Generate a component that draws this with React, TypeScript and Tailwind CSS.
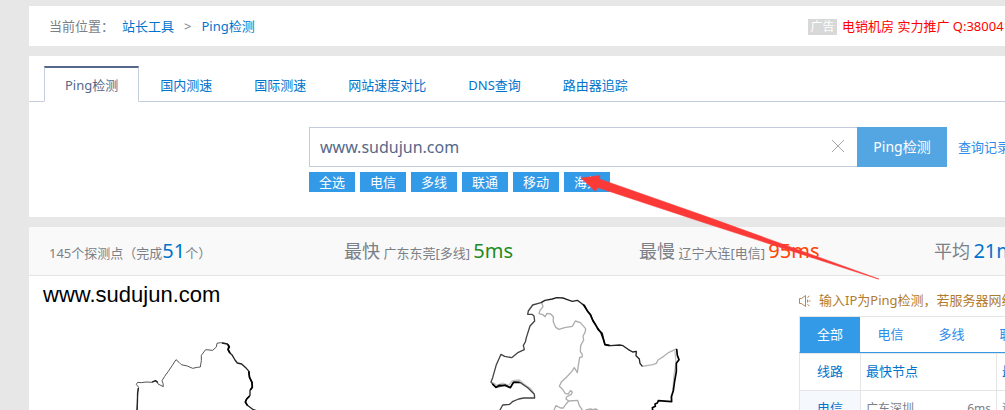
import { JSX } from "react";

const tabs = ["Ping检测", "国内测速", "国际测速", "网站速度对比", "DNS查询", "路由器追踪"];
const lines = ["全选", "电信", "多线", "联通", "移动", "海外"];
const resultTabs = ["全部", "电信", "多线", "联通", "移动"];

const Breadcrumb = (): JSX.Element => {
    return (
        <div className="flex h-10 items-center bg-white pt-0.5 pl-5 whitespace-nowrap">
            <nav className="flex items-center">
                <span className="text-[#7b8087]">当前位置：</span>
                <a href="#" className="ml-2 text-[#0074cc]">站长工具</a>
                <span className="mx-2.5 text-[#7b8087]">&gt;</span>
                <a href="#" className="text-[#0074cc]">Ping检测</a>
            </nav>
            <div className="ml-auto flex w-[197px] items-center overflow-hidden">
                <span className="mr-[5px] w-[29px] shrink-0 bg-[#d8d8d8] text-center text-xs leading-4 text-white">广告</span>
                <a href="#" className="text-[#ff0000]">电销机房 实力推广 Q:380041</a>
            </div>
        </div>
    );
};

const SearchPanel = (): JSX.Element => {
    return (
        <section className="mt-2.5 bg-white pt-2.5 pb-[25px]">
            <div className="flex h-9 border-b border-[#c3cddb] pl-[15px]">
                {tabs.map((tab, i) => (
                    <a
                        key={tab}
                        href="#"
                        className={
                            i === 0
                                ? "-mb-px border border-t-2 border-[#c3cddb] border-t-[#55688a] border-b-white bg-white px-5 leading-[34px] text-[#55688a]"
                                : "border border-t-2 border-transparent px-5 leading-[34px] text-[#0074cc]"
                        }
                    >
                        {tab}
                    </a>
                ))}
            </div>
            <div className="mt-[25px] pl-[280px]">
                <form className="flex h-10 items-stretch">
                    <div className="relative min-w-0 flex-1">
                        <input
                            type="text"
                            aria-label="域名"
                            defaultValue="www.sudujun.com"
                            className="h-10 w-full border border-r-0 border-[#c3cadb] pr-10 pl-2.5 text-base text-[#55688a] focus:outline-none"
                        />
                        <button type="button" aria-label="清空" className="absolute top-3 right-3">
                            <svg width="14" height="14" viewBox="0 0 14 14" fill="none" stroke="#a9a9a9" strokeWidth="1">
                                <path d="M1 1l12 12M13 1L1 13" />
                            </svg>
                        </button>
                    </div>
                    <button type="button" className="w-[90px] bg-[#54a6e3] text-sm text-white">Ping检测</button>
                    <div className="w-[58px] overflow-hidden pl-[11px] leading-10 whitespace-nowrap">
                        <a href="#" className="text-[#2d8cea]">查询记录</a>
                    </div>
                </form>
                <div className="mt-[5px] flex gap-[5px]">
                    {lines.map((line) => (
                        <button key={line} type="button" className="h-5 w-[46px] bg-[#329ae7] leading-5 text-white">
                            {line}
                        </button>
                    ))}
                </div>
            </div>
        </section>
    );
};

const Summary = (): JSX.Element => {
    return (
        <div className="flex h-[49px] items-center border-b border-[#e5e5e5] bg-[#f9f9f9] pt-[3px] pl-5 leading-8 whitespace-nowrap text-[#7b8087]">
            <div className="flex-1">
                145个探测点（完成<span className="text-xl text-[#0074cc]">51</span>个）
            </div>
            <div className="flex-1">
                <span className="text-lg">最快</span> 广东东莞[多线] <span className="text-xl text-[#1e8c1e]">5ms</span>
            </div>
            <div className="flex-1">
                <span className="text-lg">最慢</span> 辽宁大连[电信] <span className="text-xl text-[#ff4400]">95ms</span>
            </div>
            <div className="w-[71px] overflow-hidden">
                <span className="text-lg">平均</span> <span className="text-xl text-[#0074cc]">21ms</span>
            </div>
        </div>
    );
};

const ChinaMap = (): JSX.Element => {
    return (
        <div className="relative min-w-0 flex-1">
            <h1 className="absolute top-[5px] left-3.5 font-[Liberation_Sans,sans-serif] text-[22px] leading-7 text-black">www.sudujun.com</h1>
            <svg width="770" height="134" viewBox="0 0 2310 402" fill="none" strokeLinejoin="round">
                {/* western border */}
                <g transform="translate(273 162)">
                    <path
                        stroke="#555"
                        strokeWidth="3"
                        d="M51 242L53 215L52 190L56 172L49 163L53 157L64 158L78 156L98 157L106 152L112 155L114 162L130 170L129 160L126 152L134 139L145 124L157 106L168 89L177 97L184 104L202 108L218 115L232 112L241 111L244 92L244 76L257 59L278 61L289 51L291 40L301 38L315 40L325 43L325 56"
                    />
                    <path stroke="#222" strokeWidth="4" d="M51 242L52 215L53 192L55 174M96 156L106 152L113 157M306 39L322 42L327 49L324 58L329 68L337 76L345 90L352 99L365 102L379 115L387 124L388 141L396 156L397 171L390 181L390 196L380 207L376 216L382 226L400 239L410 242" />
                    <path stroke="#000" strokeWidth="5" d="M324 44L328 51L324 59L330 69M386 124L389 143L396 158L397 172L391 180M389 198L380 207L376 216L382 226" />
                </g>
                {/* north-eastern provinces */}
                <g transform="translate(1323 27)">
                    <path
                        stroke="#adadad"
                        strokeWidth="4"
                        d="M215 52L219 65L210 76L207 86L219 89L225 95L231 85L242 87L250 95L250 111L257 127L267 133L284 128L307 124L316 108L331 113L347 131L345 143L339 153L341 165L332 182L331 200L337 208L336 216L329 217L325 242L322 263L313 248L305 260L290 276L274 291L268 304L277 312L286 326L295 327L301 317L307 321L304 328L289 336L288 342L296 348L323 346L328 362L337 375M296 348L285 361L280 369L272 369L258 362L252 375M347 375L362 372L368 374L378 372L384 376"
                    />
                    <path stroke="#b0b0b0" strokeWidth="4" d="M516 244L535 241L548 239L559 235L564 225L581 214L597 202L621 191" />
                    <path stroke="#c4c4c4" strokeWidth="4" d="M68 293L81 301L98 294L116 301L127 287L148 285L163 298L182 311L191 324M615 198L618 236L612 269L610 299L605 345" />
                    <path
                        stroke="#444"
                        strokeWidth="4"
                        d="M90 375L98 360L119 358L129 349L146 342L161 339L194 339L193 328L174 309L151 293L132 291L121 308L107 300L78 307L63 291L68 278L79 239L93 208L104 214L125 218L145 202L163 194L160 181L166 171L169 158L180 123L194 108L192 93L186 88L173 88L175 78L188 60L213 53"
                    />
                    <path
                        stroke="#222"
                        strokeWidth="4"
                        d="M213 53L225 46L247 42L260 38L279 39L290 43L307 49L322 46L334 55L344 62L353 79L362 89L367 102L377 119L384 134L397 145L401 163L405 179L422 182L449 180L459 182L474 193L488 201L499 199L498 212L508 222L510 235L517 244"
                    />
                    <path
                        stroke="#000"
                        strokeWidth="5"
                        d="M340 59L353 79L362 91L369 108L382 128L393 143L399 160L405 179L419 182M67 297L78 307L87 301L104 301L121 308L130 292L149 292M620 192L622 211L627 224L619 235L619 260L614 288L610 317L604 335L605 350L565 347L562 354L555 357L556 364L547 368L548 376"
                    />
                </g>
            </svg>
        </div>
    );
};

const Results = (): JSX.Element => {
    return (
        <aside className="w-[206px] shrink-0 overflow-hidden pt-[13px] whitespace-nowrap">
            <p className="flex h-6 items-center text-[#b07b2c]">
                <svg className="mr-2 shrink-0" width="12" height="12" viewBox="0 0 12 12" fill="none" stroke="#b08a50" strokeWidth="1">
                    <path d="M2.5 3.500h-2v5h2M2.500 3.500L6.500 0.500v11L2.500 8.500M8.500 4.500v3M8.500 2.500L10.500 1M8.500 9.500L10.500 11M9.500 6h2" />
                </svg>
                输入IP为Ping检测，若服务器网络
            </p>
            <div className="mt-[3px] flex h-[37px] w-[400px] border-t border-b border-l border-t-[#e5e5e5] border-b-[#329ae7] border-l-[#e5e5e5]">
                {resultTabs.map((tab, i) => (
                    <button
                        key={tab}
                        type="button"
                        className={i === 0 ? "w-[60px] bg-[#329ae7] text-white" : "w-[61px] text-[#2d8cea]"}
                    >
                        {tab}
                    </button>
                ))}
            </div>
            <table className="w-[400px] table-fixed border-collapse border border-[#e5e5e5]">
                <thead>
                    <tr className="h-[37px] text-[#0074cc]">
                        <th className="w-[61px] border border-[#e5e5e5] font-normal">线路</th>
                        <th className="w-[136px] border border-[#e5e5e5] pl-[5px] text-left font-normal">最快节点</th>
                        <th className="border border-[#e5e5e5] pl-[5px] text-left font-normal">最慢节点</th>
                    </tr>
                </thead>
                <tbody>
                    <tr className="h-[37px] text-[#7b8087]">
                        <td className="border border-[#e5e5e5] bg-[#f5f9fd] text-center text-[#0074cc]">电信</td>
                        <td className="border border-[#e5e5e5] px-[5px] text-xs">
                            <span className="flex justify-between">
                                <span>广东深圳</span>
                                <span>6ms</span>
                            </span>
                        </td>
                        <td className="border border-[#e5e5e5] pl-[5px] text-xs">辽宁大连</td>
                    </tr>
                </tbody>
            </table>
        </aside>
    );
};

export default function App(): JSX.Element {
    return (
        <div className="relative h-screen overflow-hidden bg-[#e7e7e7] pt-1.5 pl-[29px] font-['Noto_Sans','Noto_Sans_CJK_SC',sans-serif] text-[13px]">
            <Breadcrumb />
            <SearchPanel />
            <section className="mt-2.5 bg-white">
                <Summary />
                <div className="flex">
                    <ChinaMap />
                    <Results />
                </div>
            </section>
            {/* pointer arrow over the line buttons */}
            <svg className="pointer-events-none absolute top-[170px] left-[575px]" width="310" height="115" viewBox="0 0 310 115">
                <path d="M6 8L25 5.500L24.500 9L130 46L304 109L303 109L130 53L22.500 17.500L20.500 21.500Z" fill="#fb3a38" stroke="#fb3a38" strokeWidth="0.5" />
            </svg>
        </div>
    );
}
